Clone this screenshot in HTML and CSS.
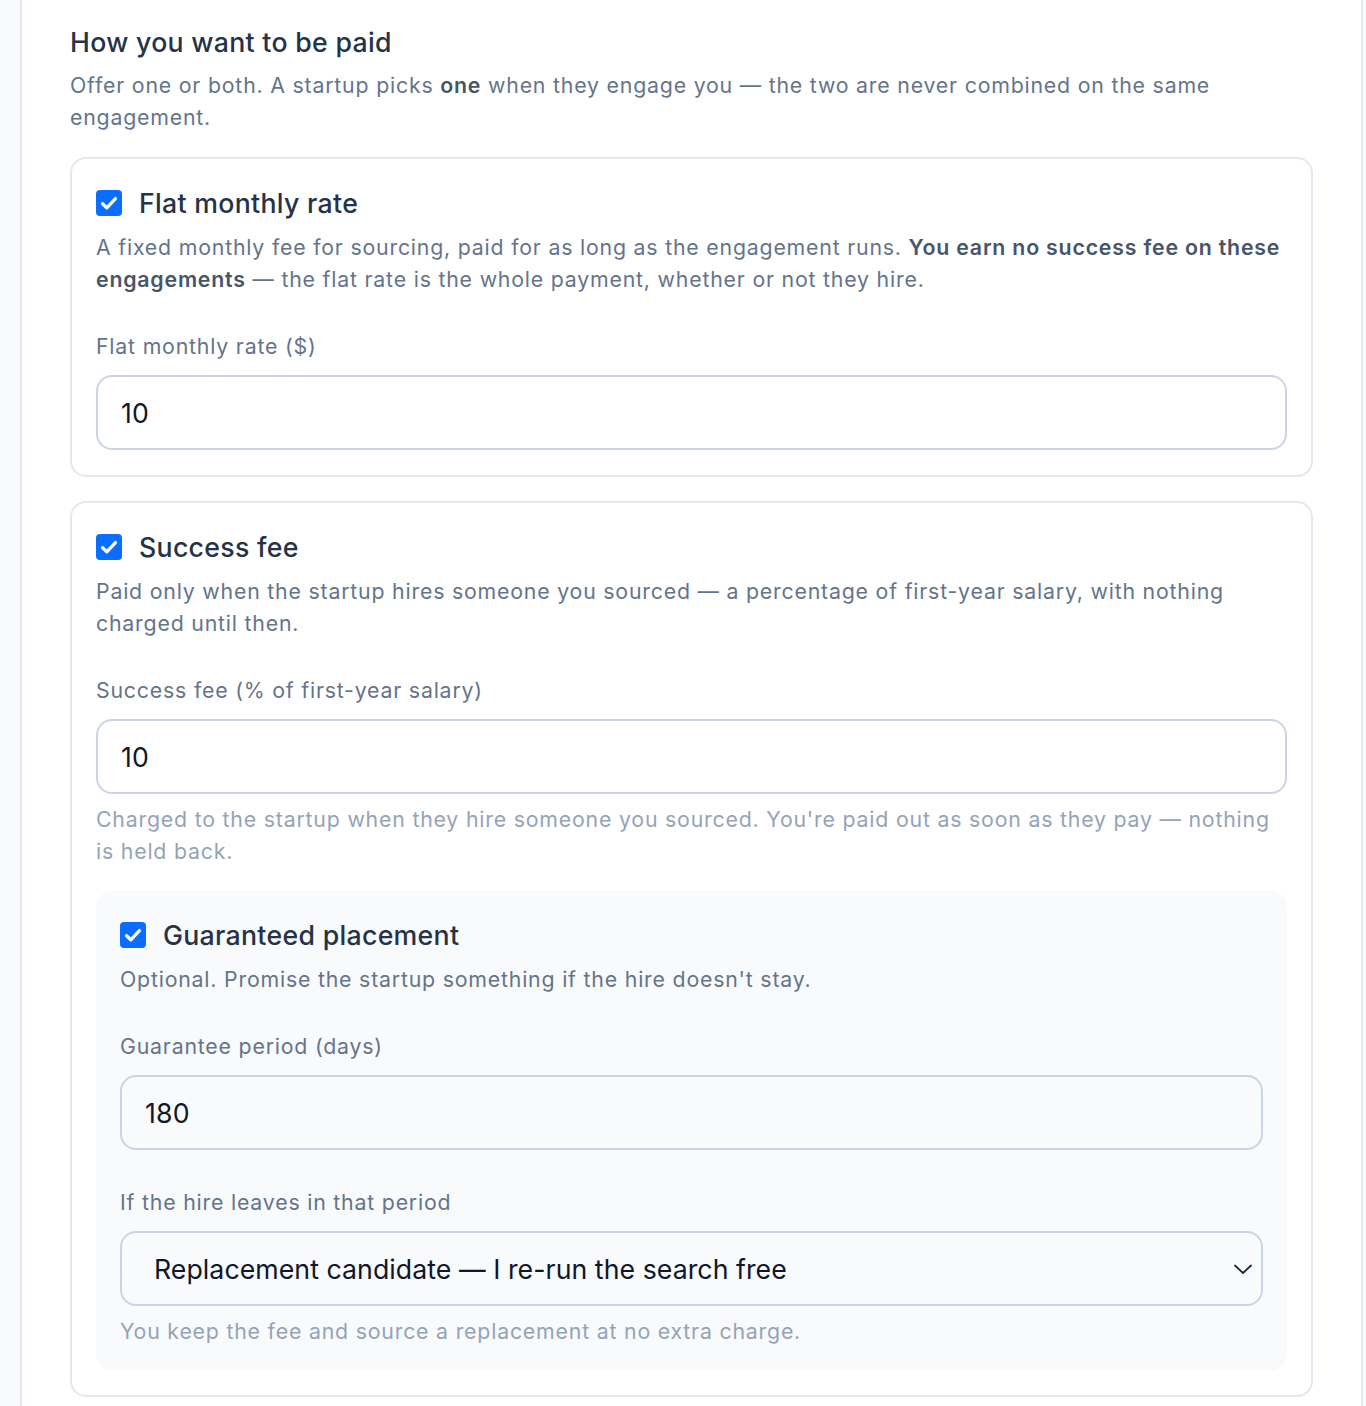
FILE: index.html
```html
<!DOCTYPE html>
<html lang="en">
<head>
<meta charset="utf-8">
<title>How you want to be paid</title>
<link rel="stylesheet" href="styles.css">
</head>
<body>
<div class="shell">
  <section class="panel">
    <h2 class="section-title">How you want to be paid</h2>
    <p class="section-desc">Offer one or both. A startup picks <strong>one</strong> when they engage you — the two are never combined on the same engagement.</p>

    <div class="card">
      <label class="check-row">
        <span class="check"><svg viewBox="0 0 24 24" width="22" height="22"><path d="M5 12.8l4.6 4.4L19 7.2" fill="none" stroke="#fff" stroke-width="3.6" stroke-linecap="round" stroke-linejoin="round"/></svg></span>
        <span class="check-title">Flat monthly rate</span>
      </label>
      <p class="card-desc">A fixed monthly fee for sourcing, paid for as long as the engagement runs. <strong>You earn no success fee on these engagements</strong> — the flat rate is the whole payment, whether or not they hire.</p>
      <div class="field">
        <div class="field-label">Flat monthly rate ($)</div>
        <div class="input">10</div>
      </div>
    </div>

    <div class="card">
      <label class="check-row">
        <span class="check"><svg viewBox="0 0 24 24" width="22" height="22"><path d="M5 12.8l4.6 4.4L19 7.2" fill="none" stroke="#fff" stroke-width="3.6" stroke-linecap="round" stroke-linejoin="round"/></svg></span>
        <span class="check-title">Success fee</span>
      </label>
      <p class="card-desc">Paid only when the startup hires someone you sourced — a percentage of first-year salary, with nothing charged until then.</p>
      <div class="field">
        <div class="field-label">Success fee (% of first-year salary)</div>
        <div class="input">10</div>
        <p class="hint">Charged to the startup when they hire someone you sourced. You're paid out as soon as they pay — nothing is held back.</p>
      </div>

      <div class="subbox">
        <label class="check-row">
          <span class="check"><svg viewBox="0 0 24 24" width="22" height="22"><path d="M5 12.8l4.6 4.4L19 7.2" fill="none" stroke="#fff" stroke-width="3.6" stroke-linecap="round" stroke-linejoin="round"/></svg></span>
          <span class="check-title">Guaranteed placement</span>
        </label>
        <p class="card-desc">Optional. Promise the startup something if the hire doesn't stay.</p>
        <div class="field">
          <div class="field-label">Guarantee period (days)</div>
          <div class="input">180</div>
        </div>
        <div class="field field-gap">
          <div class="field-label">If the hire leaves in that period</div>
          <div class="input select">
            <span>Replacement candidate — I re-run the search free</span>
            <svg class="chev" viewBox="0 0 20 12" width="20" height="12"><path d="M2 2.5l8 7.5 8-7.5" fill="none" stroke="#1e293b" stroke-width="1.8" stroke-linecap="round" stroke-linejoin="round"/></svg>
          </div>
          <p class="hint">You keep the fee and source a replacement at no extra charge.</p>
        </div>
      </div>
    </div>
  </section>
</div>
</body>
</html>
```

FILE: styles.css
```css
* { box-sizing: border-box; }
html, body { margin: 0; padding: 0; }
body {
  background: #f8fafc;
  font-family: Inter, "Noto Sans", "Liberation Sans", sans-serif;
  color: #64748b;
  -webkit-font-smoothing: antialiased;
}
.shell {
  padding: 0 3px 0 20px;
}
.panel {
  background: #fff;
  border-left: 2px solid #e2e8f0;
  border-right: 2px solid #e2e8f0;
  padding: 24px 48px 10px 48px;
  min-height: 1406px;
}
.section-title {
  margin: 0;
  font-size: 26.7px;
  font-weight: 500;
  color: #253247;
  line-height: 36px;
  letter-spacing: 0.3px;
}
.section-desc {
  margin: 9px 0 24px;
  font-size: 21.3px;
  line-height: 32px;
  letter-spacing: 0.8px;
  color: #64748b;
}
.section-desc strong, .card-desc strong {
  font-weight: 600;
  color: #475569;
}
.card {
  border: 2px solid #e2e8f0;
  border-radius: 16px;
  padding: 26px 24px 25px;
  margin-bottom: 24px;
}
.check-row {
  display: flex;
  align-items: center;
  gap: 17px;
  height: 36px;
}
.check {
  width: 26px;
  height: 26px;
  border-radius: 4px;
  background: #0b6dff;
  display: flex;
  align-items: center;
  justify-content: center;
  flex: none;
}
.check-title {
  font-size: 26.7px;
  font-weight: 500;
  color: #253247;
  line-height: 36px;
  letter-spacing: 0.3px;
}
.card-desc {
  margin: 10px 0 0;
  font-size: 21.3px;
  line-height: 32px;
  letter-spacing: 0.8px;
  color: #64748b;
}
.field {
  margin-top: 35px;
}
.field-gap {
  margin-top: 36px;
}
.field-label {
  font-size: 21.3px;
  line-height: 32px;
  letter-spacing: 0.8px;
  color: #64748b;
  margin-bottom: 13px;
}
.input {
  height: 75px;
  border: 2px solid #cbd5e1;
  border-radius: 16px;
  padding: 0 23px;
  display: flex;
  align-items: center;
  font-size: 26.7px;
  letter-spacing: 0.2px;
  color: #0f172a;
  background: transparent;
}
.select {
  justify-content: space-between;
  padding: 0 8px 0 32px;
  letter-spacing: 0.05px;
}
.chev { flex: none; }
.hint {
  margin: 9px 0 0;
  font-size: 21.3px;
  line-height: 32px;
  letter-spacing: 0.8px;
  color: #94a3b8;
}
.subbox {
  margin-top: 24px;
  background: #f8fafc;
  border-radius: 16px;
  padding: 26px 24px 23px;
}
```
